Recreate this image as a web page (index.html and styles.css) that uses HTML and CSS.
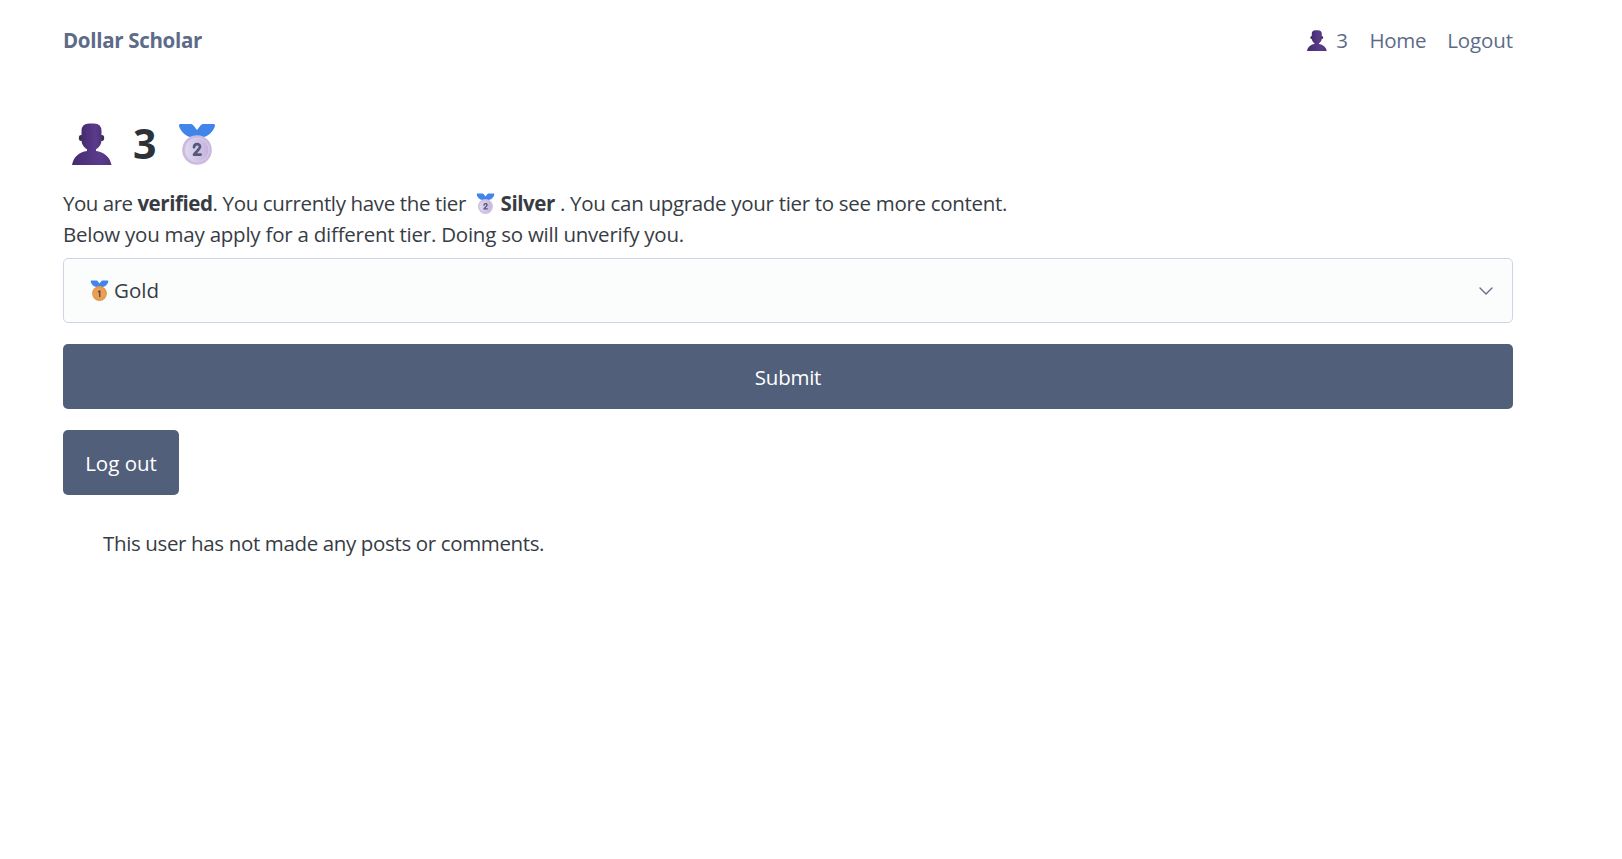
FILE: index.html
```
<!DOCTYPE html>
<html lang="en">
<head>
<meta charset="utf-8">
<title>Dollar Scholar</title>
<link rel="stylesheet" href="styles.css">
</head>
<body>
<svg class="defs" width="0" height="0" aria-hidden="true">
  <defs>
    <linearGradient id="skin" x1="0" x2="1"><stop offset="0" stop-color="#452b70"/><stop offset=".7" stop-color="#5a3b8b"/><stop offset="1" stop-color="#4f327d"/></linearGradient>
    <linearGradient id="silver" x1="0" x2="1"><stop offset="0" stop-color="#dfdaef"/><stop offset="1" stop-color="#c6b2dc"/></linearGradient>
    <symbol id="person" viewBox="0 0 40 42">
      <ellipse cx="9" cy="15" rx="2.2" ry="3" fill="#38304f"/><ellipse cx="30" cy="15" rx="2.2" ry="3" fill="#38304f"/>
      <path d="M15 23h9v5c8 1 14 6 15.500 14H0C1.500 34 7 29 15 28z" fill="url(#skin)"/>
      <path d="M9.500 8Q9.500.5 17 .5h5Q29.500.5 29.500 8v9c0 6-5 10.500-10 10.500S9.500 23 9.500 17z" fill="url(#skin)"/>
    </symbol>
    <symbol id="ribbon" viewBox="0 0 36 42">
      <path d="M1.500 1H12q1.500 0 2.500 1.500L18 7l3.500-4.500Q22.500 1 24 1h10.500q2 0 1.300 2.500C34.500 8 29 14 24 14H12C7 14 1.500 8 .2 3.500Q-.5 1 1.500 1z" fill="#4285ea"/>
    </symbol>
    <symbol id="medal-two" viewBox="0 0 36 42">
      <use href="#ribbon" width="36" height="42"/>
      <circle cx="18" cy="27" r="14.800" fill="#cbb9df"/><circle cx="18" cy="27" r="12" fill="url(#silver)" stroke="#d9cde8" stroke-width="1"/>
      <path d="M15 24.200c.2-4 6-4 6-.4 0 2.400-4 4.800-6 7.900h6.600" fill="none" stroke="#53597a" stroke-width="2.700" stroke-linecap="round" stroke-linejoin="round"/>
    </symbol>
    <symbol id="medal-one" viewBox="0 0 36 42">
      <use href="#ribbon" width="36" height="42"/>
      <circle cx="18" cy="27" r="14.800" fill="#df9850"/><circle cx="18" cy="27" r="12" fill="#e9a052"/>
      <path d="M16 23.500l2.500-1.500v11" fill="none" stroke="#684653" stroke-width="3" stroke-linecap="round" stroke-linejoin="round"/>
    </symbol>
  </defs>
</svg>
<div class="container">
  <nav class="nav">
    <a class="brand">Dollar Scholar</a>
    <div class="links">
      <a class="account"><svg class="icon-person"><use href="#person"/></svg><span>3</span></a>
      <a class="home">Home</a>
      <a class="logout">Logout</a>
    </div>
  </nav>
  <main>
    <h1 class="title"><svg class="title-person"><use href="#person"/></svg><span class="title-id">3</span><svg class="title-medal"><use href="#medal-two"/></svg></h1>
    <p class="intro"><span class="run-a">You are </span><strong class="run-b">verified</strong><span class="run-c">. You currently have the tier</span><svg class="medal inline-medal"><use href="#medal-two"/></svg><strong class="run-d">Silver</strong><span class="run-e"> . You can upgrade your tier to see more content.</span><br><span class="run-f">Below you may apply for a different tier. Doing so will unverify you.</span></p>
    <div class="select"><svg class="medal"><use href="#medal-one"/></svg><span class="option">Gold</span>
      <svg class="chevron" viewBox="0 0 14 8"><path d="M1 1l6 6 6-6"/></svg></div>
    <button class="btn submit">Submit</button>
    <button class="btn out">Log out</button>
    <p class="empty">This user has not made any posts or comments.</p>
  </main>
</div>
</body>
</html>
```
FILE: styles.css
```
* { box-sizing: border-box; }
body { margin: 0; background: #fff; color: #373c44; font: 20.5px/31px "Open Sans", "Noto Sans", sans-serif; }
svg { flex: none; }
.defs { position: absolute; }
.container { width: 1450px; margin-left: 63px; }
.nav { display: flex; justify-content: space-between; align-items: center; height: 81px; color: #5d6b89; }
.brand { font-weight: 700; letter-spacing: -.31px; }
.links { display: flex; align-items: center; }
.account { display: flex; align-items: center; gap: 9px; margin-right: 21.500px; }
.icon-person { width: 20px; height: 21px; }
.home { margin-right: 21px; letter-spacing: -.3px; }
.logout { letter-spacing: -.1px; }
.title { display: flex; align-items: center; height: 42px; margin: 42px 0 0; padding-left: 9px; font-size: 41px; line-height: 42px; color: #2d3138; }
.title-person { width: 40px; height: 42px; margin-right: 21px; }
.title-id { padding-bottom: 2px; }
.title-medal { width: 36px; height: 42px; margin-left: 22.500px; }
.intro { margin: 23px 0 0; height: 70px; white-space: pre; }
.run-a { letter-spacing: -.49px; }
.run-b { letter-spacing: -.43px; }
.run-c { letter-spacing: -.36px; }
.run-d { letter-spacing: -.4px; }
.run-e { letter-spacing: -.31px; }
.run-f { letter-spacing: -.235px; }
.medal { width: 19px; height: 21px; }
.inline-medal { margin: 0 5px 0 10.500px; vertical-align: -3px; }
.select { display: flex; align-items: center; height: 65px; padding: 0 19.500px 0 26px; border: 1px solid #cfd5e2; border-radius: 5px; background: #fbfcfc; }
.option { margin-left: 5px; }
.chevron { width: 14px; height: 8px; margin-left: auto; fill: none; stroke: #6b6c88; stroke-width: 1.4; stroke-linecap: round; stroke-linejoin: round; }
.btn { display: block; height: 65px; margin: 21px 0 0; padding: 2px 0 0; border: 0; border-radius: 5px; background: #525f7a; color: #fff; font: inherit; }
.submit { width: 100%; letter-spacing: -.25px; }
.out { width: 116px; }
.empty { margin: 33px 0 0 40px; letter-spacing: -.36px; }
```
